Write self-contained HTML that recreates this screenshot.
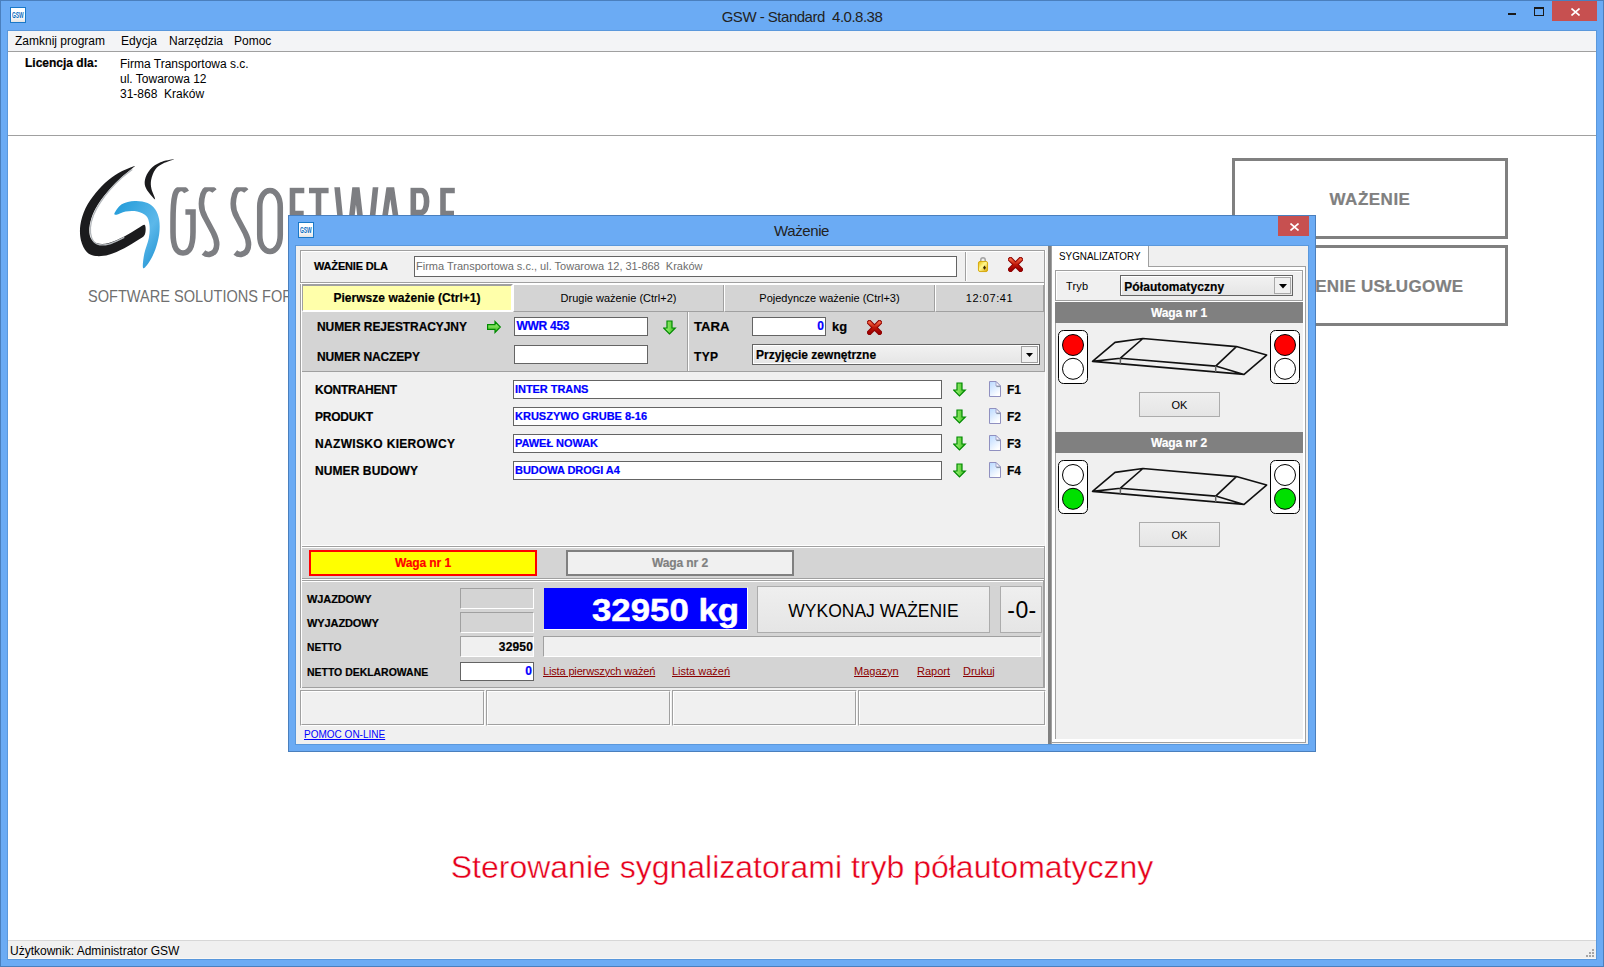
<!DOCTYPE html>
<html><head><meta charset="utf-8">
<style>
*{margin:0;padding:0;box-sizing:border-box}
html,body{width:1604px;height:967px;overflow:hidden;background:#fff}
body{position:relative;font-family:"Liberation Sans",sans-serif;font-size:12px;color:#000}
.a{position:absolute}
.t{position:absolute;white-space:nowrap;line-height:1}
.b{font-weight:bold;-webkit-text-stroke:0.2px currentColor}
</style></head><body>
<!-- main frame -->
<div class="a" style="left:0;top:0;width:1604px;height:967px;background:#6babf4;border:1px solid #4a7fbd"></div>
<div class="a" style="left:7px;top:30px;width:1590px;height:930px;background:#5a98dc"></div>
<div class="a" style="left:8px;top:31px;width:1588px;height:928px;background:#fff"></div>
<!-- app icon -->
<div class="a" style="left:10px;top:7px;width:16px;height:16px;background:linear-gradient(#fff 55%,#e4e4e4);border:1px solid #1a78c8"></div>
<div class="t" style="left:12px;top:11px;font-size:8.5px;color:#0a6cc0;font-weight:bold;transform:scaleX(0.58);transform-origin:0 0">GSW</div>
<!-- title -->
<div class="t" style="left:0;width:1604px;text-align:center;top:8.5px;font-size:15px;color:#222;letter-spacing:-0.5px">GSW - Standard&nbsp; 4.0.8.38</div>
<!-- min/max/close -->
<div class="a" style="left:1508px;top:13px;width:8px;height:2px;background:#1a1a1a"></div>
<div class="a" style="left:1534px;top:7px;width:10px;height:9px;border:1px solid #1a1a1a;border-top-width:2px"></div>
<div class="a" style="left:1552px;top:1px;width:45px;height:20px;background:#c75050"></div>
<svg class="a" style="left:1571px;top:8px" width="9" height="8" viewBox="0 0 9 8"><path d="M0.5 0.5L8.5 7.5M8.5 0.5L0.5 7.5" stroke="#fff" stroke-width="1.6"/></svg>
<!-- menu -->
<div class="a" style="left:8px;top:31px;width:1588px;height:20px;background:#f3f4f6"></div>
<div class="a" style="left:8px;top:51px;width:1588px;height:1px;background:#a0a0a0"></div>
<div class="t" style="left:15px;top:35px;font-size:12px">Zamknij program</div>
<div class="t" style="left:121px;top:35px;font-size:12px">Edycja</div>
<div class="t" style="left:169px;top:35px;font-size:12px">Narzędzia</div>
<div class="t" style="left:234px;top:35px;font-size:12px">Pomoc</div>
<!-- license -->
<div class="t b" style="left:25px;top:57px;font-size:12px">Licencja dla:</div>
<div class="t" style="left:120px;top:57px;font-size:12px;line-height:15px">Firma Transportowa s.c.<br>ul. Towarowa 12<br>31-868&nbsp; Kraków</div>
<div class="a" style="left:8px;top:135px;width:1588px;height:1px;background:#a0a0a0"></div>

<!-- right buttons -->
<div class="a" style="left:1232px;top:158px;width:276px;height:81px;border:3px solid #808080"></div>
<div class="t b" style="left:1232px;width:276px;text-align:center;top:190.6px;font-size:17px;color:#808080;letter-spacing:0.5px">WAŻENIE</div>
<div class="a" style="left:1232px;top:245px;width:276px;height:81px;border:3px solid #808080"></div>
<div class="t b" style="left:1232px;width:276px;text-align:center;top:277.6px;font-size:17px;color:#808080;letter-spacing:0.28px">WAŻENIE USŁUGOWE</div>

<!-- red caption -->
<div class="t" style="left:0;width:1604px;text-align:center;top:851px;font-size:32px;color:#e6001a;-webkit-text-stroke:0.4px #fff">Sterowanie sygnalizatorami tryb półautomatyczny</div>

<!-- status bar -->
<div class="a" style="left:8px;top:940px;width:1588px;height:1px;background:#d7d7d7"></div>
<div class="a" style="left:8px;top:941px;width:1588px;height:18px;background:#f0f0f0"></div>
<div class="t" style="left:10px;top:945px;font-size:12px;color:#000">Użytkownik: Administrator GSW</div>
<div class="a" style="left:8px;top:958px;width:1588px;height:1px;background:#fbf8f4"></div>
<div class="a" style="left:1592px;top:949px;width:2px;height:2px;background:#a6a6a6"></div>
<div class="a" style="left:1589px;top:952px;width:2px;height:2px;background:#a6a6a6"></div>
<div class="a" style="left:1592px;top:952px;width:2px;height:2px;background:#a6a6a6"></div>
<div class="a" style="left:1586px;top:955px;width:2px;height:2px;background:#a6a6a6"></div>
<div class="a" style="left:1589px;top:955px;width:2px;height:2px;background:#a6a6a6"></div>
<div class="a" style="left:1592px;top:955px;width:2px;height:2px;background:#a6a6a6"></div>

<!--LOGOSTART-->
<svg class="a" style="left:0;top:0" width="480" height="320" viewBox="0 0 480 320">
<defs>
<linearGradient id="blu" x1="0" y1="0" x2="1" y2="1"><stop offset="0" stop-color="#1f9ad8"/><stop offset="0.6" stop-color="#5cb8ea"/><stop offset="1" stop-color="#1a8fd0"/></linearGradient>
</defs>
<path d="M133.99 166.16 C132.16 166.70 125.91 169.07 121.71 171.33 C117.51 173.59 113.09 176.18 108.78 179.73 C104.47 183.29 99.73 187.92 95.85 192.66 C91.98 197.40 88.10 202.78 85.51 208.17 C82.93 213.56 81.10 219.59 80.34 224.97 C79.59 230.36 79.91 235.96 80.99 240.49 C82.06 245.01 84.33 249.53 86.80 252.12 C89.28 254.71 92.19 255.57 95.85 256.00 C99.52 256.43 104.04 256.00 108.78 254.71 C113.52 253.41 119.55 250.61 124.29 248.24 C129.03 245.87 133.81 242.75 137.22 240.49 C140.62 238.22 143.47 237.25 144.72 234.67 C145.97 232.08 145.97 225.94 144.72 224.97 C143.47 224.00 140.62 226.91 137.22 228.85 C133.81 230.79 129.03 234.24 124.29 236.61 C119.55 238.98 113.30 241.95 108.78 243.07 C104.26 244.19 100.16 244.19 97.15 243.33 C94.13 242.47 91.98 240.53 90.68 237.90 C89.39 235.27 89.07 231.44 89.39 227.56 C89.71 223.68 90.90 218.94 92.62 214.63 C94.35 210.32 96.82 206.02 99.73 201.71 C102.64 197.40 106.41 192.87 110.07 188.78 C113.73 184.69 117.94 180.59 121.71 177.15 C125.48 173.70 130.65 169.93 132.69 168.10 C134.74 166.27 135.82 165.62 133.99 166.16 Z" fill="#1b1b1d"/>
<path d="M132.31 169.39 C130.54 170.79 125.37 174.45 121.71 177.79 C118.04 181.13 113.89 185.33 110.33 189.43 C106.78 193.52 103.18 198.11 100.38 202.35 C97.58 206.60 95.19 210.69 93.53 214.89 C91.87 219.09 90.73 223.72 90.42 227.56 C90.12 231.39 90.55 235.14 91.72 237.90 C92.88 240.66 94.56 243.07 97.40 244.11 C100.25 245.14 104.30 245.23 108.78 244.11 C113.26 242.99 121.71 238.50 124.29 237.38" fill="none" stroke="#b4b8bc" stroke-width="1.3"/>
<path d="M174.06 159.31 C173.63 159.09 164.47 160.60 160.49 162.28 C156.50 163.96 152.73 166.48 150.14 169.39 C147.56 172.30 145.62 176.50 144.97 179.73 C144.33 182.96 144.59 185.50 146.27 188.78 C147.95 192.05 154.20 199.38 155.06 199.38 C155.92 199.38 152.08 192.05 151.44 188.78 C150.79 185.50 150.53 182.96 151.18 179.73 C151.83 176.50 153.33 172.08 155.32 169.39 C157.30 166.70 159.95 165.25 163.07 163.57 C166.20 161.89 174.49 159.52 174.06 159.31 Z" fill="#1b1b1d"/>
<path d="M114.60 213.08 C115.46 211.36 118.37 206.30 121.71 204.29 C125.05 202.29 130.32 201.28 134.63 201.06 C138.94 200.84 144.11 201.60 147.56 203.00 C151.01 204.40 153.38 206.66 155.32 209.46 C157.25 212.26 158.55 215.71 159.19 219.80 C159.84 223.90 159.84 229.07 159.19 234.02 C158.55 238.98 157.04 244.79 155.32 249.53 C153.59 254.27 150.90 259.40 148.85 262.46 C146.81 265.52 143.79 269.40 143.04 267.89 C142.28 266.38 143.36 258.41 144.33 253.41 C145.30 248.41 147.99 242.64 148.85 237.90 C149.71 233.16 149.93 228.64 149.50 224.97 C149.07 221.31 148.31 218.19 146.27 215.93 C144.22 213.66 140.67 212.16 137.22 211.40 C133.77 210.65 129.03 210.86 125.58 211.40 C122.14 211.94 118.37 214.35 116.54 214.63 C114.70 214.91 113.73 214.81 114.60 213.08 Z" fill="url(#blu)"/>
<clipPath id="lc"><rect x="160" y="187.3" width="320" height="80"/></clipPath><g fill="none" stroke="#7d7e82" stroke-width="5.6" stroke-linecap="butt" clip-path="url(#lc)">
<path d="M186.5 192 C183.5 186.5 177 187.5 175 195 C173.3 201 173 212 173 222 L173 232 C173 246 176 253 183 253 C190 253 193 246 193 232 L193 212 H185.4"/>
<path d="M214.5 191 C211 187 205 187.5 203 194 C200.5 202 201 210 205 217 L213.5 233 C217 240 218 246 215 251 C212 255 207 255.5 203.5 252.5"/>
<path d="M246.3 191 C242.8 187 236.8 187.5 234.8 194 C232.3 202 232.8 210 236.8 217 L245.3 233 C248.8 240 249.8 246 246.8 251 C243.8 255 238.8 255.5 235.3 252.5"/>
<path d="M259.75 207 C259.75 185 280.25 185 280.25 207 L280.25 235 C280.25 257 259.75 257 259.75 235 Z"/>
<path d="M292.5 260 V190.5 H304.3 M292.5 213.5 H303.7"/>
<path d="M309 190.5 H328.6 M318.5 190.5 V260"/>
<path d="M336.4 180 L344.5 260 M348 250 L355.9 180 L364 250 M376.3 180 L368 260" stroke-linejoin="miter" stroke-miterlimit="10"/>
<path d="M380 250 L390.3 180 L400.6 250" stroke-linejoin="miter" stroke-miterlimit="10"/>
<path d="M413.3 260 V190.5 H421 C428.5 190.5 428.5 212.5 421 212.5 H413.3"/>
<path d="M443 260 V190.5 H454.8 M443 213.5 H454"/>
</g>
</svg>
<div class="t" style="left:88px;top:288.4px;font-size:16.5px;color:#6f6f6f;transform:scaleX(0.882);transform-origin:0 0">SOFTWARE SOLUTIONS FOR</div>
<!--LOGOEND-->
<!-- DIALOG frame -->
<div class="a" style="left:288px;top:215px;width:1028px;height:537px;background:#6babf4;border:1px solid #4a7fbd"></div>
<div class="a" style="left:295px;top:245px;width:1014px;height:500px;background:#5a98dc"></div>
<div class="a" style="left:296px;top:246px;width:1012px;height:498px;background:#f0f0f0"></div>
<div class="a" style="left:298px;top:222px;width:16px;height:16px;background:linear-gradient(#fff 55%,#e4e4e4);border:1px solid #1a78c8"></div>
<div class="t" style="left:300px;top:226px;font-size:8.5px;color:#0a6cc0;font-weight:bold;transform:scaleX(0.58);transform-origin:0 0">GSW</div>
<div class="t" style="left:774px;top:223px;font-size:15px;color:#222;letter-spacing:-0.4px">Ważenie</div>
<div class="a" style="left:1278px;top:216px;width:31px;height:20px;background:#c75050"></div>
<svg class="a" style="left:1290px;top:223px" width="9" height="8" viewBox="0 0 9 8"><path d="M0.5 0.5L8.5 7.5M8.5 0.5L0.5 7.5" stroke="#fff" stroke-width="1.6"/></svg>

<!-- header panel -->
<div class="a" style="left:300px;top:250px;width:745px;height:34px;border-top:1px solid #a0a0a0;border-left:1px solid #a0a0a0;border-right:1px solid #fff"></div>
<div class="a" style="left:301px;top:251px;width:1px;height:31px;background:#fff"></div>
<div class="a" style="left:301px;top:251px;width:744px;height:1px;background:#fff"></div>
<div class="a" style="left:300px;top:282px;width:745px;height:1px;background:#a0a0a0"></div>
<div class="a" style="left:300px;top:283px;width:745px;height:2px;background:#fff"></div>
<div class="t b" style="left:314px;top:260.7px;font-size:11px;letter-spacing:-0.18px">WAŻENIE DLA</div>
<div class="a" style="left:414px;top:256px;width:543px;height:21px;background:#fff;border:1px solid #646464"></div>
<div class="t" style="left:416px;top:260.7px;font-size:11px;color:#6d6d6d">Firma Transportowa s.c., ul. Towarowa 12, 31-868&nbsp; Kraków</div>
<div class="a" style="left:965px;top:252px;width:1px;height:29px;background:#a0a0a0"></div>
<div class="a" style="left:966px;top:252px;width:1px;height:29px;background:#fff"></div>
<!--LOCKX-->

<!-- tab row -->
<div class="a" style="left:302px;top:284px;width:211px;height:28px;background:#ffffaa;border-top:2px solid #a0a0a0;border-left:1px solid #a0a0a0;border-right:2px solid #fff;border-bottom:2px solid #fff"></div>
<div class="t b" style="left:302px;width:210px;text-align:center;top:291.8px;font-size:12px;letter-spacing:0.03px">Pierwsze ważenie (Ctrl+1)</div>
<div class="a" style="left:513px;top:285px;width:211px;height:27px;background:#d4d4d4;border-left:1px solid #fff;border-right:1px solid #a0a0a0;border-bottom:1px solid #a0a0a0"></div>
<div class="t" style="left:513px;width:211px;text-align:center;top:292.7px;font-size:11px">Drugie ważenie (Ctrl+2)</div>
<div class="a" style="left:724px;top:285px;width:211px;height:27px;background:#d4d4d4;border-left:1px solid #fff;border-right:1px solid #a0a0a0;border-bottom:1px solid #a0a0a0"></div>
<div class="t" style="left:724px;width:211px;text-align:center;top:292.7px;font-size:11px">Pojedyncze ważenie (Ctrl+3)</div>
<div class="a" style="left:935px;top:285px;width:109px;height:27px;background:#d4d4d4;border-left:1px solid #fff;border-right:1px solid #a0a0a0;border-bottom:1px solid #a0a0a0"></div>
<div class="t" style="left:935px;width:109px;text-align:center;top:292.7px;font-size:11px;letter-spacing:0.6px">12:07:41</div>
<div class="a" style="left:300px;top:284px;width:1px;height:404px;background:#a0a0a0"></div>
<div class="a" style="left:301px;top:285px;width:1px;height:403px;background:#fff"></div>

<!-- registration section -->
<div class="a" style="left:302px;top:312px;width:742px;height:60px;background:#d4d4d4"></div>
<div class="a" style="left:302px;top:371px;width:743px;height:1px;background:#a0a0a0"></div>
<div class="a" style="left:687px;top:312px;width:1px;height:59px;background:#a0a0a0"></div>
<div class="a" style="left:688px;top:312px;width:1px;height:59px;background:#fff"></div>
<div class="t b" style="left:317px;top:320.8px;font-size:12px;letter-spacing:-0.08px">NUMER REJESTRACYJNY</div>
<div class="t b" style="left:317px;top:350.8px;font-size:12px;letter-spacing:-0.14px">NUMER NACZEPY</div>
<div class="a" style="left:514px;top:317px;width:134px;height:19px;background:#fff;border:1px solid #646464"></div>
<div class="t b" style="left:516.5px;top:319.8px;font-size:12px;color:#0000ff;letter-spacing:-0.28px">WWR 453</div>
<div class="a" style="left:514px;top:345px;width:134px;height:19px;background:#fff;border:1px solid #646464"></div>
<div class="t b" style="left:694px;top:320.8px;font-size:12px;transform:scaleX(1.094);transform-origin:0 0">TARA</div>
<div class="t b" style="left:694px;top:350.8px;font-size:12px;letter-spacing:0.3px">TYP</div>
<div class="a" style="left:752px;top:317px;width:74px;height:19px;background:#fff;border:1px solid #646464"></div>
<div class="t b" style="left:752px;width:72px;text-align:right;top:319.8px;font-size:12px;color:#0000ff">0</div>
<div class="t b" style="left:831.5px;top:320.8px;font-size:12px;transform:scaleX(1.07);transform-origin:0 0">kg</div>
<div class="a" style="left:752px;top:344px;width:288px;height:21px;background:linear-gradient(#f2f2f2,#e5e5e5);border:1px solid #646464"></div>
<div class="a" style="left:753px;top:345px;width:286px;height:19px;border:1px solid #fff"></div>
<div class="t b" style="left:756px;top:349px;font-size:12px">Przyjęcie zewnętrzne</div>
<div class="a" style="left:1021px;top:346px;width:17px;height:17px;background:#f0f0f0;border:1px solid #a0a0a0"></div>
<svg class="a" style="left:1026px;top:353px" width="7" height="5" viewBox="0 0 7 5"><path d="M0 0H7L3.5 4Z" fill="#000"/></svg>
<!--ARROWS1-->

<!-- fields area -->
<div class="t b" style="left:315px;top:384px;font-size:12px;letter-spacing:-0.22px">KONTRAHENT</div>
<div class="t b" style="left:315px;top:411px;font-size:12px;letter-spacing:-0.22px">PRODUKT</div>
<div class="t b" style="left:315px;top:438px;font-size:12px;letter-spacing:0.33px">NAZWISKO KIEROWCY</div>
<div class="t b" style="left:315px;top:465px;font-size:12px;letter-spacing:0.09px">NUMER BUDOWY</div>
<div class="a" style="left:513px;top:380px;width:429px;height:19px;background:#fff;border:1px solid #646464"></div>
<div class="a" style="left:513px;top:407px;width:429px;height:19px;background:#fff;border:1px solid #646464"></div>
<div class="a" style="left:513px;top:434px;width:429px;height:19px;background:#fff;border:1px solid #646464"></div>
<div class="a" style="left:513px;top:461px;width:429px;height:19px;background:#fff;border:1px solid #646464"></div>
<div class="t b" style="left:515px;top:383.7px;font-size:11px;color:#0000ff;letter-spacing:-0.05px">INTER TRANS</div>
<div class="t b" style="left:515px;top:410.7px;font-size:11px;color:#0000ff;letter-spacing:0px">KRUSZYWO GRUBE 8-16</div>
<div class="t b" style="left:515px;top:437.7px;font-size:11px;color:#0000ff;letter-spacing:-0.05px">PAWEŁ NOWAK</div>
<div class="t b" style="left:515px;top:464.7px;font-size:11px;color:#0000ff;letter-spacing:-0.05px">BUDOWA DROGI A4</div>
<div class="t b" style="left:1007px;top:383.5px;font-size:12px;letter-spacing:0px">F1</div>
<div class="t b" style="left:1007px;top:410.5px;font-size:12px;letter-spacing:0px">F2</div>
<div class="t b" style="left:1007px;top:437.5px;font-size:12px;letter-spacing:0px">F3</div>
<div class="t b" style="left:1007px;top:464.5px;font-size:12px;letter-spacing:0px">F4</div>
<!--ARROWS2-->
<div class="a" style="left:1044px;top:250px;width:1px;height:122px;background:#a0a0a0"></div>
<div class="a" style="left:1044px;top:546px;width:1px;height:142px;background:#a0a0a0"></div>
<div class="a" style="left:1045px;top:250px;width:1px;height:475px;background:#fff"></div>
<!-- scale select section -->
<div class="a" style="left:302px;top:545px;width:742px;height:1px;background:#fff"></div>
<div class="a" style="left:302px;top:546px;width:742px;height:1px;background:#a0a0a0"></div>
<div class="a" style="left:302px;top:547px;width:742px;height:1px;background:#fff"></div>
<div class="a" style="left:302px;top:548px;width:742px;height:30px;background:#d4d4d4"></div>
<div class="a" style="left:302px;top:578px;width:742px;height:1px;background:#a0a0a0"></div>
<div class="a" style="left:302px;top:579px;width:742px;height:1px;background:#fff"></div>
<div class="a" style="left:309px;top:550px;width:228px;height:26px;background:#ffff00;border:2px solid #ff0000"></div>
<div class="t b" style="left:309px;width:228px;text-align:center;top:556.6px;font-size:12px;color:#ff0000;letter-spacing:-0.11px">Waga nr 1</div>
<div class="a" style="left:566px;top:550px;width:228px;height:26px;background:#f0f0f0;border:2px solid #808080"></div>
<div class="t b" style="left:566px;width:228px;text-align:center;top:556.6px;font-size:12px;color:#808080;letter-spacing:-0.11px">Waga nr 2</div>

<!-- weight section -->
<div class="a" style="left:302px;top:580px;width:742px;height:1px;background:#a0a0a0"></div>
<div class="a" style="left:302px;top:581px;width:742px;height:1px;background:#fff"></div>
<div class="a" style="left:302px;top:582px;width:741px;height:105px;background:#d4d4d4"></div>
<div class="a" style="left:302px;top:687px;width:742px;height:1px;background:#a0a0a0"></div>
<div class="a" style="left:1043px;top:580px;width:1px;height:107px;background:#a0a0a0"></div>
<div class="t b" style="left:307px;top:594px;font-size:11px;letter-spacing:-0.1px">WJAZDOWY</div>
<div class="t b" style="left:307px;top:618px;font-size:11px;letter-spacing:-0.1px">WYJAZDOWY</div>
<div class="t b" style="left:307px;top:642.2px;font-size:11px;transform:scaleX(0.93);transform-origin:0 0">NETTO</div>
<div class="t b" style="left:307px;top:667.4px;font-size:11px;transform:scaleX(0.95);transform-origin:0 0">NETTO DEKLAROWANE</div>
<div class="a" style="left:460px;top:588px;width:74px;height:21px;background:#d4d4d4;border-top:1px solid #a0a0a0;border-left:1px solid #a0a0a0;border-right:1px solid #fff;border-bottom:1px solid #fff"></div>
<div class="a" style="left:460px;top:612px;width:74px;height:21px;background:#d4d4d4;border-top:1px solid #a0a0a0;border-left:1px solid #a0a0a0;border-right:1px solid #fff;border-bottom:1px solid #fff"></div>
<div class="a" style="left:460px;top:636px;width:74px;height:21px;background:#f0f0f0;border-top:1px solid #a0a0a0;border-left:1px solid #a0a0a0;border-right:1px solid #fff;border-bottom:1px solid #fff"></div>
<div class="t b" style="left:440px;width:93px;text-align:right;top:640.5px;font-size:12px;letter-spacing:0.16px">32950</div>
<div class="a" style="left:460px;top:662px;width:74px;height:19px;background:#fff;border:1px solid #646464"></div>
<div class="t b" style="left:440px;width:92px;text-align:right;top:664.9px;font-size:12px;color:#0000ff">0</div>
<div class="a" style="left:543px;top:587px;width:205px;height:43px;background:#0000ff;border-top:1px solid #d4d4d4;border-left:1px solid #d4d4d4;border-right:1px solid #fff;border-bottom:1px solid #fff"></div>
<div class="t b" style="left:543px;width:196px;text-align:right;top:593.9px;font-size:32px;color:#fff;transform:scaleX(1.087);transform-origin:100% 0;-webkit-text-stroke:0.5px #fff">32950 kg</div>
<div class="a" style="left:757px;top:586px;width:233px;height:47px;background:linear-gradient(#efefef,#e5e5e5);border:1px solid #acacac"></div>
<div class="t" style="left:757px;width:233px;text-align:center;top:600.7px;font-size:19px;transform:scaleX(0.92);transform-origin:50% 0">WYKONAJ WAŻENIE</div>
<div class="a" style="left:1000px;top:586px;width:42px;height:47px;background:linear-gradient(#efefef,#e5e5e5);border:1px solid #acacac"></div>
<div class="t" style="left:1001px;width:42px;text-align:center;top:598.9px;font-size:23px;letter-spacing:0.44px">-0-</div>
<div class="a" style="left:543px;top:636px;width:498px;height:21px;background:#f0f0f0;border-top:1px solid #a0a0a0;border-left:1px solid #a0a0a0;border-right:1px solid #fff;border-bottom:1px solid #fff"></div>
<div class="t" style="left:543px;top:665.7px;font-size:11px;color:#8b0000;text-decoration:underline;letter-spacing:-0.15px">Lista pierwszych ważeń</div>
<div class="t" style="left:672px;top:665.7px;font-size:11px;color:#8b0000;text-decoration:underline">Lista ważeń</div>
<div class="t" style="left:854px;top:665.7px;font-size:11px;color:#8b0000;text-decoration:underline">Magazyn</div>
<div class="t" style="left:917px;top:665.7px;font-size:11px;color:#8b0000;text-decoration:underline">Raport</div>
<div class="t" style="left:963px;top:665.7px;font-size:11px;color:#8b0000;text-decoration:underline">Drukuj</div>

<!-- status boxes -->
<div class="a" style="left:300px;top:690px;width:185px;height:36px;border-top:1px solid #a0a0a0;border-left:1px solid #a0a0a0;border-right:1px solid #fff;border-bottom:1px solid #fff"></div>
<div class="a" style="left:301px;top:691px;width:183px;height:34px;border-right:1px solid #a0a0a0;border-bottom:1px solid #a0a0a0;border-top:1px solid #fff;border-left:1px solid #fff"></div>
<div class="a" style="left:486px;top:690px;width:185px;height:36px;border-top:1px solid #a0a0a0;border-left:1px solid #a0a0a0;border-right:1px solid #fff;border-bottom:1px solid #fff"></div>
<div class="a" style="left:487px;top:691px;width:183px;height:34px;border-right:1px solid #a0a0a0;border-bottom:1px solid #a0a0a0;border-top:1px solid #fff;border-left:1px solid #fff"></div>
<div class="a" style="left:672px;top:690px;width:185px;height:36px;border-top:1px solid #a0a0a0;border-left:1px solid #a0a0a0;border-right:1px solid #fff;border-bottom:1px solid #fff"></div>
<div class="a" style="left:673px;top:691px;width:183px;height:34px;border-right:1px solid #a0a0a0;border-bottom:1px solid #a0a0a0;border-top:1px solid #fff;border-left:1px solid #fff"></div>
<div class="a" style="left:858px;top:690px;width:188px;height:36px;border-top:1px solid #a0a0a0;border-left:1px solid #a0a0a0;border-right:1px solid #fff;border-bottom:1px solid #fff"></div>
<div class="a" style="left:859px;top:691px;width:186px;height:34px;border-right:1px solid #a0a0a0;border-bottom:1px solid #a0a0a0;border-top:1px solid #fff;border-left:1px solid #fff"></div>
<div class="t" style="left:303.8px;top:728.6px;font-size:11px;color:#0000ff;text-decoration:underline;transform:scaleX(0.91);transform-origin:0 0">POMOC ON-LINE</div>

<!-- splitter -->
<div class="a" style="left:1048px;top:246px;width:3px;height:498px;background:#808080"></div>
<div class="a" style="left:1051px;top:246px;width:1px;height:498px;background:#a0a0a0"></div>

<!-- SYGNALIZATORY page -->
<div class="a" style="left:1052px;top:266px;width:254px;height:477px;background:#fff;border-right:1px solid #a0a0a0;border-bottom:1px solid #a0a0a0"></div>
<div class="a" style="left:1149px;top:246px;width:157px;height:21px;background:#f0f0f0;border-bottom:1px solid #a0a0a0"></div>
<div class="a" style="left:1052px;top:246px;width:97px;height:21px;background:#fff;border-right:1px solid #a0a0a0"></div>
<div class="t" style="left:1058.7px;top:250.7px;font-size:11px;transform:scaleX(0.895);transform-origin:0 0">SYGNALIZATORY</div>
<div class="a" style="left:1055px;top:270px;width:248px;height:469px;background:#f0f0f0;border-left:1px solid #a0a0a0;border-top:1px solid #a0a0a0"></div>
<div class="a" style="left:1055px;top:300px;width:248px;height:1px;background:#a0a0a0"></div>
<div class="a" style="left:1055px;top:301px;width:248px;height:1px;background:#fff"></div>
<div class="a" style="left:1302px;top:270px;width:1px;height:31px;background:#a0a0a0"></div>
<div class="a" style="left:1056px;top:271px;width:246px;height:1px;background:#fff"></div>
<div class="a" style="left:1056px;top:271px;width:1px;height:29px;background:#fff"></div>
<div class="t" style="left:1066px;top:281.3px;font-size:11px;letter-spacing:0.2px">Tryb</div>
<div class="a" style="left:1120px;top:275px;width:173px;height:21px;background:linear-gradient(#f2f2f2,#e5e5e5);border:1px solid #646464"></div>
<div class="a" style="left:1121px;top:276px;width:171px;height:19px;border-top:1px solid #fff;border-left:1px solid #fff"></div>
<div class="t b" style="left:1124.2px;top:280.6px;font-size:12px;letter-spacing:0.09px">Półautomatyczny</div>
<div class="a" style="left:1274px;top:277px;width:17px;height:17px;background:#f0f0f0;border:1px solid #a8a8a8"></div>
<svg class="a" style="left:1279px;top:284px" width="8" height="5" viewBox="0 0 8 5"><path d="M0 0H8L4 4.5Z" fill="#000"/></svg>

<div class="a" style="left:1055px;top:302px;width:248px;height:21px;background:#808080"></div>
<div class="t b" style="left:1055px;width:248px;text-align:center;top:306.6px;font-size:12px;color:#fff;letter-spacing:-0.11px">Waga nr 1</div>
<div class="a" style="left:1055px;top:432px;width:248px;height:21px;background:#808080"></div>
<div class="t b" style="left:1055px;width:248px;text-align:center;top:436.8px;font-size:12px;color:#fff;letter-spacing:-0.11px">Waga nr 2</div>
<div class="a" style="left:1303px;top:302px;width:1px;height:437px;background:#fff"></div>
<!--LIGHTS-->
<div class="a" style="left:1139px;top:392px;width:81px;height:25px;background:linear-gradient(#efefef,#e5e5e5);border:1px solid #acacac"></div>
<div class="t" style="left:1139px;width:81px;text-align:center;top:399.7px;font-size:11px">OK</div>
<div class="a" style="left:1139px;top:522px;width:81px;height:25px;background:linear-gradient(#efefef,#e5e5e5);border:1px solid #acacac"></div>
<div class="t" style="left:1139px;width:81px;text-align:center;top:529.7px;font-size:11px">OK</div>

<!--DIALOGEND-->
<!--ICONS--><svg width="0" height="0" style="position:absolute"><defs>
<linearGradient id="gH" x1="0" y1="0" x2="0" y2="1"><stop offset="0" stop-color="#a8ff80"/><stop offset="1" stop-color="#40b820"/></linearGradient>
<linearGradient id="gV" x1="0" y1="0" x2="1" y2="0"><stop offset="0" stop-color="#a8ff80"/><stop offset="1" stop-color="#40b820"/></linearGradient>
<linearGradient id="rX" x1="0" y1="0" x2="0" y2="1"><stop offset="0" stop-color="#f06040"/><stop offset="0.5" stop-color="#c01808"/><stop offset="1" stop-color="#a00000"/></linearGradient>
<linearGradient id="gold" x1="0" y1="0" x2="1" y2="1"><stop offset="0" stop-color="#e8b800"/><stop offset="0.45" stop-color="#fff890"/><stop offset="1" stop-color="#d8a000"/></linearGradient>
<linearGradient id="doc" x1="0" y1="0" x2="0.6" y2="1"><stop offset="0" stop-color="#b8d8ff"/><stop offset="1" stop-color="#ffffff"/></linearGradient>
</defs></svg>
<svg class="a" style="left:977px;top:256px" width="12" height="17" viewBox="0 0 12 17"><path d="M3.75 8V4Q3.75 1.75 6 1.75Q8.25 1.75 8.25 4V8" fill="none" stroke="#a4a4a4" stroke-width="1.5"/><path d="M3 5.45H9Q10.55 5.45 10.55 7V14Q10.55 15.55 9 15.55H3Q1.45 15.55 1.45 14V7Q1.45 5.45 3 5.45Z" fill="url(#gold)" stroke="#d4a400" stroke-width="0.9"/><path d="M7.5 9.6L9 11.7L7.5 13.8L6 11.7Z" fill="#3a2800"/></svg>
<svg class="a" style="left:1007.5px;top:256.5px" width="15" height="15" viewBox="0 0 15 15"><path d="M2.5 2.5L12.5 12.5M12.5 2.5L2.5 12.5" stroke="#8c0000" stroke-width="5" stroke-linecap="square"/><path d="M2.5 2.5L12.5 12.5M12.5 2.5L2.5 12.5" stroke="url(#rX)" stroke-width="3" stroke-linecap="square"/></svg>
<svg class="a" style="left:866.5px;top:319.5px" width="15" height="15" viewBox="0 0 15 15"><path d="M2.5 2.5L12.5 12.5M12.5 2.5L2.5 12.5" stroke="#8c0000" stroke-width="5" stroke-linecap="square"/><path d="M2.5 2.5L12.5 12.5M12.5 2.5L2.5 12.5" stroke="url(#rX)" stroke-width="3" stroke-linecap="square"/></svg>
<svg class="a" style="left:486px;top:320px" width="16" height="14" viewBox="0 0 16 14"><path d="M1.6 4.6H9V1.5L14.3 7L9 12.5V9.4H1.6Z" fill="url(#gH)" stroke="#008a00" stroke-width="1.2" stroke-linejoin="miter"/></svg>
<svg class="a" style="left:663px;top:319px" width="14" height="16" viewBox="0 0 14 16"><path d="M4 2H9V9H12.3L6.5 15L0.7 9H4Z" fill="url(#gV)" stroke="#008a00" stroke-width="1.2"/></svg>
<svg class="a" style="left:953px;top:381px" width="14" height="16" viewBox="0 0 14 16"><path d="M4 2H9V9H12.3L6.5 15L0.7 9H4Z" fill="url(#gV)" stroke="#008a00" stroke-width="1.2"/></svg>
<svg class="a" style="left:989px;top:381px" width="13" height="17" viewBox="0 0 13 17"><path d="M0.5 0.5H7L11.5 5V15.5H0.5Z" fill="url(#doc)" stroke="#9090c0" stroke-width="1"/><path d="M7 0.5V5H11.5Z" fill="#f8f8f8" stroke="#9090c0" stroke-width="0.8" stroke-linejoin="round"/><path d="M7.5 5.5H11" stroke="#8a96a8" stroke-width="1.2"/></svg>
<svg class="a" style="left:953px;top:408px" width="14" height="16" viewBox="0 0 14 16"><path d="M4 2H9V9H12.3L6.5 15L0.7 9H4Z" fill="url(#gV)" stroke="#008a00" stroke-width="1.2"/></svg>
<svg class="a" style="left:989px;top:408px" width="13" height="17" viewBox="0 0 13 17"><path d="M0.5 0.5H7L11.5 5V15.5H0.5Z" fill="url(#doc)" stroke="#9090c0" stroke-width="1"/><path d="M7 0.5V5H11.5Z" fill="#f8f8f8" stroke="#9090c0" stroke-width="0.8" stroke-linejoin="round"/><path d="M7.5 5.5H11" stroke="#8a96a8" stroke-width="1.2"/></svg>
<svg class="a" style="left:953px;top:435px" width="14" height="16" viewBox="0 0 14 16"><path d="M4 2H9V9H12.3L6.5 15L0.7 9H4Z" fill="url(#gV)" stroke="#008a00" stroke-width="1.2"/></svg>
<svg class="a" style="left:989px;top:435px" width="13" height="17" viewBox="0 0 13 17"><path d="M0.5 0.5H7L11.5 5V15.5H0.5Z" fill="url(#doc)" stroke="#9090c0" stroke-width="1"/><path d="M7 0.5V5H11.5Z" fill="#f8f8f8" stroke="#9090c0" stroke-width="0.8" stroke-linejoin="round"/><path d="M7.5 5.5H11" stroke="#8a96a8" stroke-width="1.2"/></svg>
<svg class="a" style="left:953px;top:462px" width="14" height="16" viewBox="0 0 14 16"><path d="M4 2H9V9H12.3L6.5 15L0.7 9H4Z" fill="url(#gV)" stroke="#008a00" stroke-width="1.2"/></svg>
<svg class="a" style="left:989px;top:462px" width="13" height="17" viewBox="0 0 13 17"><path d="M0.5 0.5H7L11.5 5V15.5H0.5Z" fill="url(#doc)" stroke="#9090c0" stroke-width="1"/><path d="M7 0.5V5H11.5Z" fill="#f8f8f8" stroke="#9090c0" stroke-width="0.8" stroke-linejoin="round"/><path d="M7.5 5.5H11" stroke="#8a96a8" stroke-width="1.2"/></svg>
<svg class="a" style="left:1058px;top:330px" width="31" height="55" viewBox="0 0 31 55"><rect x="0.5" y="0.5" width="29" height="53" rx="5" fill="#fff" stroke="#000" stroke-width="1"/><circle cx="15" cy="15" r="10.5" fill="#ff0000" stroke="#000" stroke-width="1"/><circle cx="15" cy="38.8" r="10.5" fill="#ffffff" stroke="#000" stroke-width="1"/></svg>
<svg class="a" style="left:1270px;top:330px" width="31" height="55" viewBox="0 0 31 55"><rect x="0.5" y="0.5" width="29" height="53" rx="5" fill="#fff" stroke="#000" stroke-width="1"/><circle cx="15" cy="15" r="10.5" fill="#ff0000" stroke="#000" stroke-width="1"/><circle cx="15" cy="38.8" r="10.5" fill="#ffffff" stroke="#000" stroke-width="1"/></svg>
<svg class="a" style="left:1086px;top:330px" width="190" height="50" viewBox="0 0 190 50"><path d="M6.5 31.4L29 12.4L56.9 8.5L150.4 16.6L180.6 25.1L158.1 44.4L6.5 31.4Z M6.5 31.4L34.4 28.2L129.7 36.1L158.1 44.4 M34.4 28.2L56.9 8.5 M129.7 36.1L150.4 16.6" fill="none" stroke="#111" stroke-width="1.6" stroke-linejoin="round"/><path d="M34.4 28.2L34.4 33.8 M129.7 36.1L129.7 42" fill="none" stroke="#666" stroke-width="1.5"/></svg>
<svg class="a" style="left:1058px;top:460px" width="31" height="55" viewBox="0 0 31 55"><rect x="0.5" y="0.5" width="29" height="53" rx="5" fill="#fff" stroke="#000" stroke-width="1"/><circle cx="15" cy="15" r="10.5" fill="#ffffff" stroke="#000" stroke-width="1"/><circle cx="15" cy="38.8" r="10.5" fill="#00e000" stroke="#000" stroke-width="1"/></svg>
<svg class="a" style="left:1270px;top:460px" width="31" height="55" viewBox="0 0 31 55"><rect x="0.5" y="0.5" width="29" height="53" rx="5" fill="#fff" stroke="#000" stroke-width="1"/><circle cx="15" cy="15" r="10.5" fill="#ffffff" stroke="#000" stroke-width="1"/><circle cx="15" cy="38.8" r="10.5" fill="#00e000" stroke="#000" stroke-width="1"/></svg>
<svg class="a" style="left:1086px;top:460px" width="190" height="50" viewBox="0 0 190 50"><path d="M6.5 31.4L29 12.4L56.9 8.5L150.4 16.6L180.6 25.1L158.1 44.4L6.5 31.4Z M6.5 31.4L34.4 28.2L129.7 36.1L158.1 44.4 M34.4 28.2L56.9 8.5 M129.7 36.1L150.4 16.6" fill="none" stroke="#111" stroke-width="1.6" stroke-linejoin="round"/><path d="M34.4 28.2L34.4 33.8 M129.7 36.1L129.7 42" fill="none" stroke="#666" stroke-width="1.5"/></svg><!--ICONSEND-->
</body></html>
